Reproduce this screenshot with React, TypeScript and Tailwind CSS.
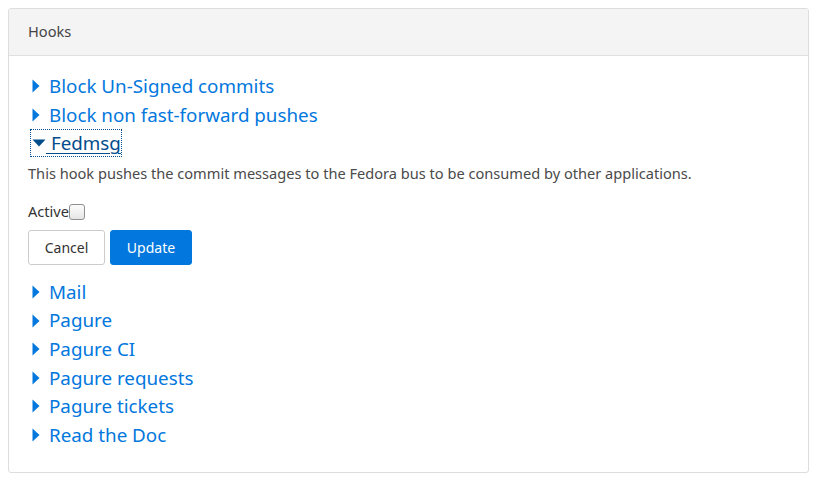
import React from "react";

const Right = () => (
  <svg width="8" height="14" viewBox="0 0 8 14" className="mr-[9px] shrink-0">
    <path d="M0.5 0.5 L7.5 7 L0.5 13.5 Z" fill="#0277dd" />
  </svg>
);

const Link = ({ t }: { t: string }) => (
  <div className="flex items-center h-[28.6px] pl-[4px]">
    <Right />
    <span className="text-[#0277dd] text-[18.8px] leading-[28.6px]">{t}</span>
  </div>
);

export default function App() {
  return (
    <div
      className="bg-white w-[821px] h-[484px] pt-[8px] px-[8px]"
      style={{ fontFamily: '"Noto Sans", sans-serif' }}
    >
      <div className="w-[801px] h-[465px] border border-[#dddddd] rounded-[3px] overflow-hidden">
        <div className="h-[47px] bg-[#f4f4f4] border-b border-[#e0e0e0] flex items-center pl-[19px] text-[14.6px] text-[#444444]">
          Hooks
        </div>
        <div className="pl-[19px] pt-[16px]">
          <Link t="Block Un-Signed commits" />
          <Link t="Block non fast-forward pushes" />
          <div className="flex h-[28.6px] items-center">
            <div className="flex items-center outline-1 outline-dotted outline-[#014c8c] h-[26px] pl-[1px] ml-[3px]">
              <svg width="14" height="8" viewBox="0 0 14 8" className="shrink-0">
                <path d="M0.5 0.5 L13.5 0.5 L7 7.5 Z" fill="#014c8c" />
              </svg>
              <span className="text-[#014c8c] text-[18.8px] leading-[26px] underline underline-offset-[3px] decoration-1">
                &nbsp;Fedmsg
              </span>
            </div>
          </div>
          <p className="text-[14.6px] leading-[21px] text-[#4a4a4a] mt-[5px]">
            This hook pushes the commit messages to the Fedora bus to be consumed by other applications.
          </p>
          <div className="flex items-center mt-[18px] h-[21px] text-[14.6px] text-[#333333]">
            <span>Active</span>
            <span className="w-[16px] h-[16px] border border-[#8f8f8f] rounded-[3px] bg-gradient-to-b from-[#fcfcfc] to-[#e6e6e6] inline-block" />
          </div>
          <div className="flex gap-[5px] mt-[7px]">
            <button className="h-[35px] w-[77px] border border-[#cccccc] rounded-[3px] bg-white text-[14px] text-[#333333]">
              Cancel
            </button>
            <button className="h-[35px] w-[82px] border border-[#0277dd] rounded-[3px] bg-[#0277dd] text-[14px] text-white">
              Update
            </button>
          </div>
          <div className="mt-[13px]">
            <Link t="Mail" />
            <Link t="Pagure" />
            <Link t="Pagure CI" />
            <Link t="Pagure requests" />
            <Link t="Pagure tickets" />
            <Link t="Read the Doc" />
          </div>
        </div>
      </div>
    </div>
  );
}
